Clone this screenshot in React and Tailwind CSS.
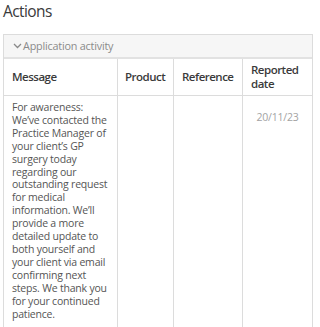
import React from "react";

const lines = [
  "For awareness:",
  "We\u2019ve contacted the",
  "Practice Manager of",
  "your client\u2019s GP",
  "surgery today",
  "regarding our",
  "outstanding request",
  "for medical",
  "information. We\u2019ll",
  "provide a more",
  "detailed update to",
  "both yourself and",
  "your client via email",
  "confirming next",
  "steps. We thank you",
  "for your continued",
  "patience.",
];

export default function App() {
  return (
    <div className="w-[314px] h-[327px] overflow-hidden bg-white pl-[3px] pr-[1px]" style={{ fontFamily: '"Open Sans", sans-serif' }}>
      <h1 className="h-[34px] pt-[1px] text-[15.5px] leading-[20px] text-[#3a3a3a] tracking-[-0.6px]">Actions</h1>
      <div className="border border-[#dcdcdc]">
        <div className="h-[24px] bg-[#f6f6f6] border-b-2 border-[#e2e2e2] flex items-center pl-[9px] text-[10.8px] text-[#8a8a8a] tracking-[-0.2px]">
          <svg width="9" height="6" viewBox="0 0 9 6" className="mr-[1px]">
            <path d="M1 1l3.5 3.5L8 1" fill="none" stroke="#8a8a8a" strokeWidth="1.3" />
          </svg>
          Application activity
        </div>
        <div className="grid grid-cols-[113px_56px_69px_1fr] text-[#3a3a3a]">
          <div className="h-[37px] flex items-center pl-[8px] text-[11.5px] font-semibold tracking-[-0.5px] border-b border-[#dcdcdc]">Message</div>
          <div className="h-[37px] flex items-center pl-[7px] text-[11.5px] font-semibold tracking-[-0.5px] border-b border-l border-[#dcdcdc]">Product</div>
          <div className="h-[37px] flex items-center pl-[8px] text-[11.5px] font-semibold tracking-[-0.5px] border-b border-l border-[#dcdcdc]">Reference</div>
          <div className="h-[37px] flex items-center pl-[8px] text-[11.5px] leading-[14px] font-semibold tracking-[-0.5px] border-b border-l border-[#dcdcdc]">Reported<br />date</div>
          <div className="pl-[8px] pt-[5px] pb-[10px] text-[10.5px] leading-[12.9px] text-[#555555] tracking-[-0.2px]">
            {lines.map((l, i) => (
              <span key={i} className="block whitespace-nowrap">{l}</span>
            ))}
          </div>
          <div className="border-l border-[#dcdcdc]" />
          <div className="border-l border-[#dcdcdc]" />
          <div className="border-l border-[#dcdcdc] pt-[15px] text-center text-[10.5px] leading-[13px] text-[#a3a3a3] tracking-[-0.2px]">20/11/23</div>
        </div>
      </div>
    </div>
  );
}
